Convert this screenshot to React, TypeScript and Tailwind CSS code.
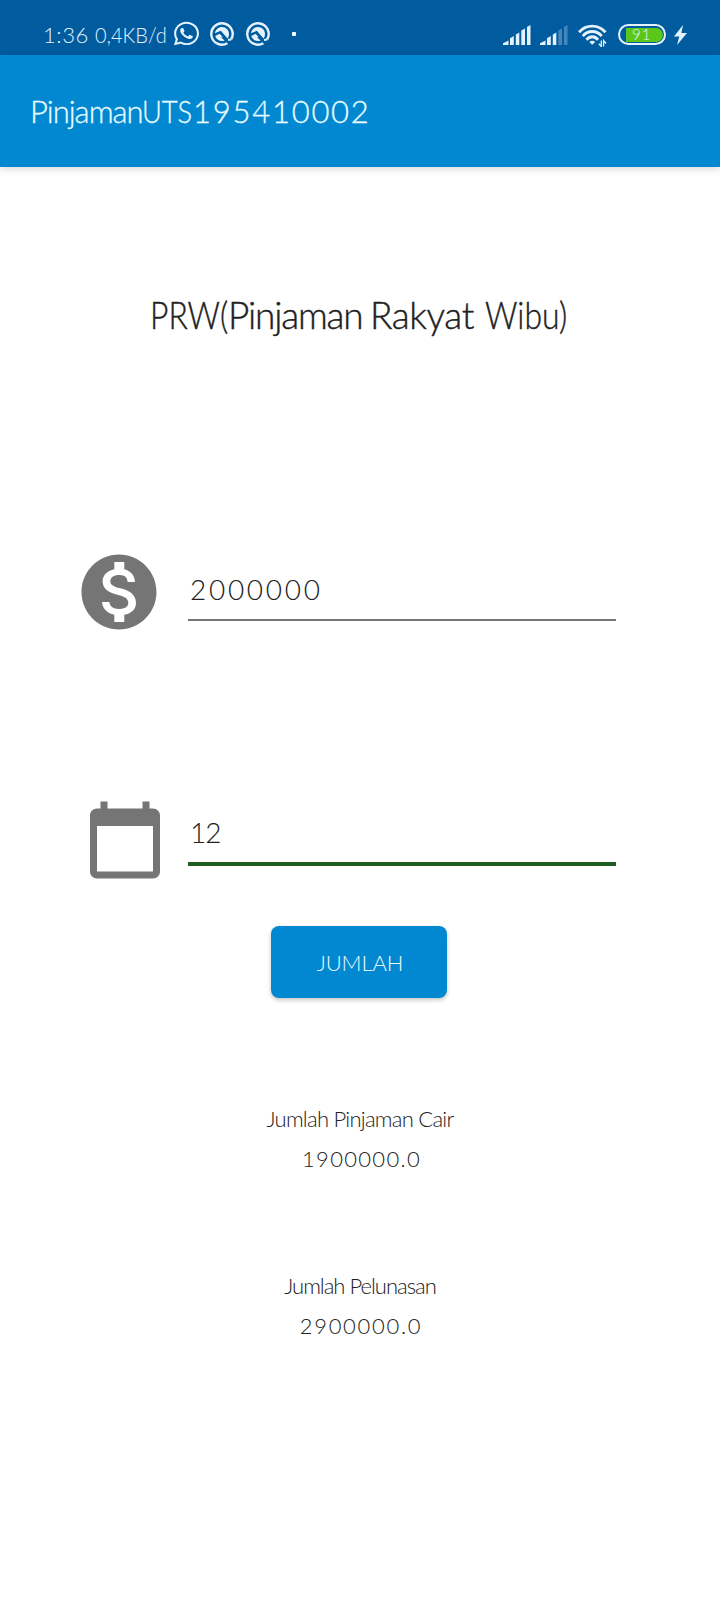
import { FaWhatsapp } from 'react-icons/fa';

function CapsuleIcon() {
  return (
    <svg viewBox="0 0 24 24" className="h-6 w-6 shrink-0" fill="none">
      <path d="M21.200 17.400A10.700 10.700 0 1 0 17.400 21.200" stroke="#e3f2fd" strokeWidth="2.400" />
      <path d="M4.800 11.300C5.500 7.500 8.500 5 12 5C16 5 19 8.200 19 12C19 13.800 18.500 15.300 17.600 16.500L10.800 8.800Z" fill="#e3f2fd" />
      <path d="M5.200 14L9.600 11.700L12.800 15.300L11 15.200L14.600 18.500C11 20 6.800 18.400 5.200 14Z" fill="#e3f2fd" />
      <path d="M18 18L21.200 17.400" stroke="#e3f2fd" strokeWidth="2" />
    </svg>
  );
}

function Signal({ level }: { level: number }) {
  const bars = [
    'M0 20V18.200L5.500 15.500V20Z',
    'M7 20V13.200L10.800 11V20Z',
    'M12.800 20V9.500L16.300 7.500V20Z',
    'M18.300 20V5.500L22 3.500V20Z',
    'M24 20V2L27.500 0V20Z',
  ];
  return (
    <svg viewBox="0 0 28 20" className="h-5 w-7 shrink-0">
      {bars.map((d, i) => (
        <path key={d} d={d} fill={i < level ? '#e3f2fd' : '#4586bb'} />
      ))}
    </svg>
  );
}

function Wifi() {
  return (
    <svg viewBox="0 0 29 23" className="h-[23px] w-[29px] shrink-0" fill="none" stroke="#e3f2fd" strokeWidth="2.900">
      <path d="M1 8.200C8 .1 20.500 .1 27.500 8.200" />
      <path d="M4.800 12.100C10 6 18.500 6 23.700 12.100" />
      <path d="M8.400 15.800C12 11.800 16.500 11.800 20.100 15.800" />
      <path d="M14.200 20.800L11.300 18C13 16.200 15.500 16.200 17.200 18Z" fill="#e3f2fd" stroke="none" />
      <path d="M23.300 16.500V22.500L20.800 19.700M25.600 22.500V16.500L28 19.500" strokeWidth="1.300" />
    </svg>
  );
}

function StatusBar() {
  return (
    <div className="flex h-[55px] items-start bg-[#005b9f] text-[22px] leading-[26px] text-[#e3f2fd]">
      <div className="flex w-[174px] shrink-0 pt-[22px] pl-[43px]">
        <span className="w-[54px] tracking-[0.600px]">1:36</span>
        <span className="origin-left scale-x-[0.910] whitespace-nowrap">0,4KB/d</span>
      </div>
      <div className="flex items-center pt-[20px]">
        <FaWhatsapp className="h-[27px] w-[25px] shrink-0" preserveAspectRatio="none" />
        <span className="ml-[11px] flex gap-3">
          <CapsuleIcon />
          <CapsuleIcon />
        </span>
        <span className="ml-[22px] h-1 w-1 rounded-[1px] bg-white" />
      </div>
      <div className="ml-auto flex items-start pr-[33px]">
        <span className="flex gap-[9px] pt-[25px]">
          <Signal level={5} />
          <Signal level={3} />
        </span>
        <span className="ml-[10px] pt-[24px]">
          <Wifi />
        </span>
        <span className="mt-[24px] ml-[11px] flex h-[21px] w-[48px] rounded-full border-2 border-[#e3f2fd] p-[1.5px] pl-[6px]">
          <span className="flex h-full w-full items-center rounded-l-[2px] rounded-r-full bg-[#5bc719] pl-[6px] text-[15px] leading-none tracking-[1px]">
            91
          </span>
        </span>
        <svg viewBox="0 0 13 20" className="mt-[25px] ml-[8px] h-5 w-[13px] shrink-0">
          <path d="M9 0L0 11.500H5.300L3 20L13 8H7.400Z" fill="#e3f2fd" />
        </svg>
      </div>
    </div>
  );
}

function Result({ label, value, labelClass, valueClass }: { label: string; value: string; labelClass: string; valueClass: string }) {
  return (
    <div className="flex flex-col items-center text-[22px] text-[#212121]">
      <span className={`h-10 leading-10 ${labelClass}`}>{label}</span>
      <span className={`h-10 leading-10 ${valueClass}`}>{value}</span>
    </div>
  );
}

export default function App() {
  return (
    <div className="flex h-[1600px] w-[720px] flex-col bg-white font-['Lato',sans-serif] font-light">
      <StatusBar />
      <header className="flex h-[112px] items-center bg-[#0288d1] pl-[30px] text-[31px] leading-10 text-[#e8fcff] shadow-[0_2px_7px_rgba(0,0,0,0.16)] [-webkit-text-stroke:0.3px]">
        <span className="w-[112px] tracking-[-1px]">Pinjaman</span>
        <span className="w-[51px] origin-left scale-x-[0.880]">UTS</span>
        <span className="tracking-[1.750px]">195410002</span>
      </header>
      <main className="flex flex-col items-center">
        <h1 className="mt-[124px] flex h-[48px] w-full pl-[150px] text-[37px] leading-[48px] whitespace-nowrap text-[#212121] [-webkit-text-stroke:0.4px]">
          <span className="w-[78px] origin-left scale-x-[0.860]">PRW(</span>
          <span className="w-[142px] tracking-[-1.200px]">Pinjaman </span>
          <span className="w-[115px] tracking-[-0.400px]">Rakyat </span>
          <span className="w-[80px] origin-left scale-x-[0.860]">Wibu)</span>
        </h1>
        <div className="mt-[207px] flex h-[92px] w-full items-start pl-[74px]">
          <svg viewBox="0 0 24 24" className="mt-[0.5px] h-[90px] w-[90px] shrink-0" fill="#757575">
            <path d="M12 2C6.480 2 2 6.480 2 12s4.480 10 10 10 10-4.480 10-10S17.520 2 12 2zm1.410 16.090V20h-2.670v-1.930c-1.710-.36-3.160-1.460-3.270-3.400h1.960c.1 1.050.82 1.870 2.650 1.870 1.960 0 2.400-.98 2.400-1.590 0-.83-.44-1.610-2.670-2.140-2.480-.6-4.180-1.620-4.180-3.670 0-1.720 1.390-2.840 3.110-3.210V4h2.670v1.950c1.860.45 2.790 1.860 2.850 3.390H14.300c-.05-1.110-.64-1.870-2.220-1.870-1.500 0-2.400.68-2.400 1.640 0 .84.65 1.390 2.670 1.910s4.180 1.390 4.180 3.910c-.02 1.830-1.380 2.830-3.120 3.160z" />
          </svg>
          <div className="mt-[23px] ml-[24px] h-[52px] w-[428px] border-b-2 border-[#757575] pl-[2px] text-[28px] leading-[40px] tracking-[2.700px] text-[#212121]">
            2000000
          </div>
        </div>
        <div className="mt-[160px] flex h-[84px] w-full items-start pl-[83px]">
          <svg viewBox="0 0 24 24" className="h-[84px] w-[84px] shrink-0" fill="#757575">
            <path d="M20 3h-1V1h-2v2H7V1H5v2H4c-1.100 0-2 .9-2 2v16c0 1.100.9 2 2 2h16c1.100 0 2-.9 2-2V5c0-1.100-.9-2-2-2zm0 18H4V8h16v13z" />
          </svg>
          <div className="mt-[16px] ml-[21px] h-[52px] w-[428px] border-b-4 border-[#1f5e23] pl-[2px] text-[28px] leading-[36px] tracking-[-1px] text-[#212121]">
            12
          </div>
        </div>
        <button className="mt-[44px] mr-[2px] h-[72px] w-[176px] rounded-lg bg-[#0288d1] pl-[2px] text-[22px] tracking-[-0.100px] text-[#e8fcff] shadow-[0_2px_4px_rgba(0,0,0,0.24)]">
          JUMLAH
        </button>
        <div className="mt-[101px] flex flex-col gap-[87px]">
          <Result label="Jumlah Pinjaman Cair" value="1900000.0" labelClass="tracking-[-0.750px]" valueClass="pl-[3px] tracking-[1.300px]" />
          <Result label="Jumlah Pelunasan" value="2900000.0" labelClass="tracking-[-1px]" valueClass="pl-[2px] tracking-[1.700px]" />
        </div>
      </main>
    </div>
  );
}
